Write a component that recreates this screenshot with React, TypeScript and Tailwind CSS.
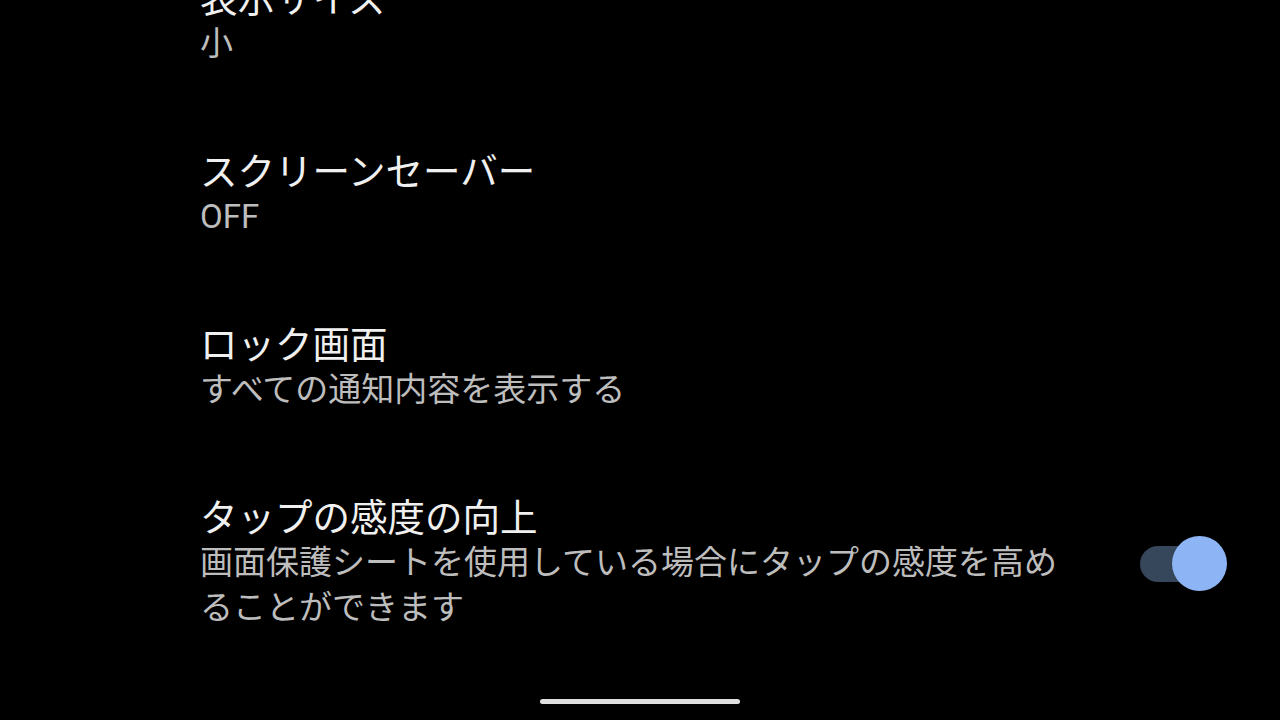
import React from "react";

type Item = {
  title: string;
  summary: string;
  toggle?: boolean;
};

const items: Item[] = [
  { title: "表示サイズ", summary: "小" },
  { title: "スクリーンセーバー", summary: "OFF" },
  { title: "ロック画面", summary: "すべての通知内容を表示する" },
  {
    title: "タップの感度の向上",
    summary: "画面保護シートを使用している場合にタップの感度を高めることができます",
    toggle: true,
  },
];

function Toggle({ checked }: { checked: boolean }) {
  return (
    <div className="relative h-[55px] w-[87px] shrink-0">
      <div
        className={
          "absolute left-0 top-[10px] h-[36px] w-[70px] rounded-full " +
          (checked ? "bg-[#36475b]" : "bg-[#5f6368]")
        }
      />
      <div
        className={
          "absolute top-0 h-[55px] w-[55px] rounded-full " +
          (checked ? "right-0 bg-[#8db4f4]" : "left-0 bg-[#dadce0]")
        }
      />
    </div>
  );
}

export default function App() {
  return (
    <div
      className="flex h-screen w-full flex-col overflow-hidden bg-black"
      style={{ fontFamily: "Roboto, 'Noto Sans CJK JP', sans-serif" }}
    >
      {/* first row is scrolled partly off the top */}
      <div className="-mt-[23px] flex flex-col gap-[84px]">
        {items.map((item) => (
          <div key={item.title} className="flex items-center pl-[200px] pr-[53px]">
            <div className="w-[880px]">
              <div className="text-[37.5px] leading-[44px] text-[#f0f0f0]">
                {item.title}
              </div>
              <div className="text-[33px] leading-[45px] text-[#bdbdbd]">
                {item.summary}
              </div>
            </div>
            <div className="flex flex-1 justify-end">
              {item.toggle && <Toggle checked />}
            </div>
          </div>
        ))}
      </div>
      <div className="mt-auto mb-[16px] h-[5px] w-[200px] self-center rounded-full bg-[#dedede]" />
    </div>
  );
}
